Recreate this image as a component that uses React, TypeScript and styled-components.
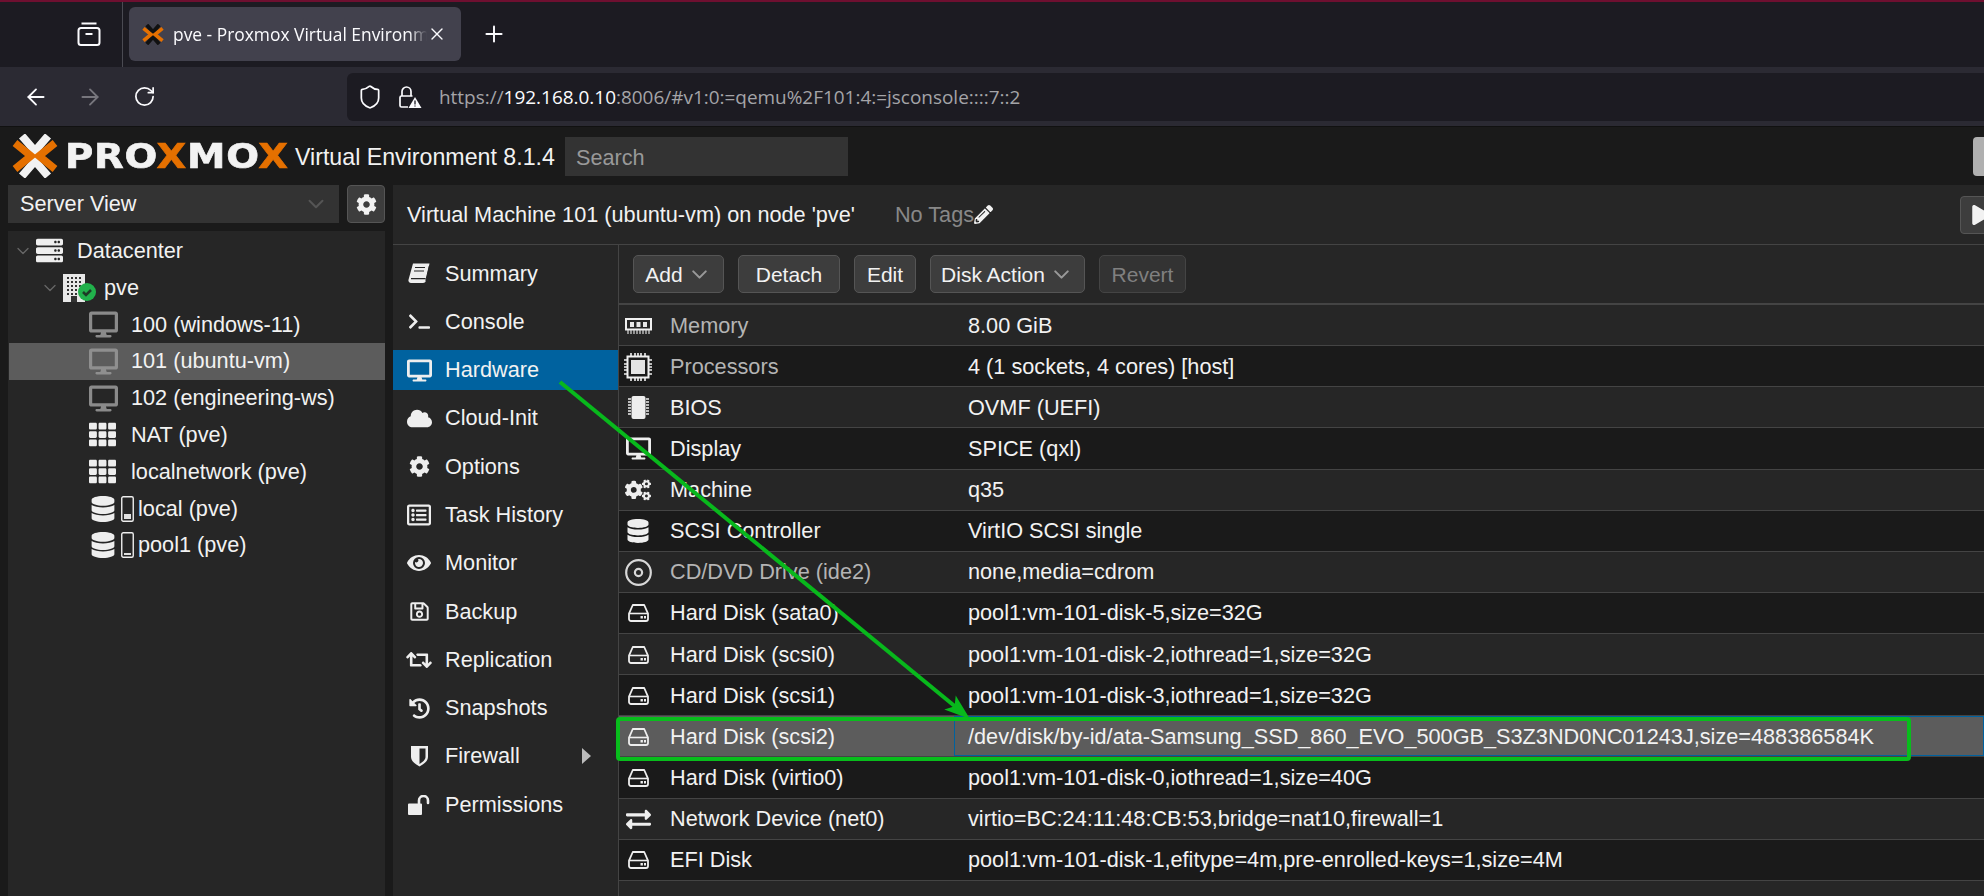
import React from 'react';
import styled, { createGlobalStyle } from 'styled-components';
import { ArrowLeft, ArrowRight, ChevronDown, Plus, RotateCw, Shield, X } from 'lucide-react';
import {
  FaTerminal,
  FaDesktop,
  FaCloud,
  FaCog,
  FaCogs,
  FaRegListAlt,
  FaEye,
  FaRegSave,
  FaRetweet,
  FaHistory,
  FaDatabase,
  FaExchangeAlt,
  FaPencilAlt,
  FaServer,
  FaTh,
  FaPlay,
} from 'react-icons/fa';

const GlobalStyle = createGlobalStyle`
  html, body {
    margin: 0;
    height: 896px;
    overflow: hidden;
    background: #1a1a1a;
  }
  * { box-sizing: border-box; }
`;

const BookIcon = () => (
  <svg width="22" height="21" viewBox="0 0 22 21">
    <path d="M5 0.5h16.5l-3.6 16.8a3 3 0 0 1-3 2.7H3a2.6 2.6 0 0 1-2.5-3.2z" fill="#eeeeee" />
    <path d="M3 15.6h14.6M7 4.5h10M6 8h10" stroke="#262626" strokeWidth="1.2" fill="none" />
    <path d="M17.8 17.6L21.3 3" stroke="#262626" strokeWidth="1" fill="none" />
  </svg>
);

const MemoryIcon = () => (
  <svg width="27" height="16" viewBox="0 0 27 16" fill="none">
    <rect x="1" y="1" width="25" height="10.5" stroke="#f0f0f0" strokeWidth="2" />
    <path d="M5 4h4v5H5zM11.5 4h4v5h-4zM18 4h4v5h-4z" fill="#e8e8e8" />
    <path d="M3 12v4M6 12v4M9 12v4M12 12v4M15 12v4M18 12v4M21 12v4M24 12v4" stroke="#dddddd" strokeWidth="1.2" />
  </svg>
);

const CpuIcon = () => (
  <svg width="28" height="28" viewBox="0 0 28 28" fill="none" stroke="#f0f0f0">
    <rect x="3.5" y="3.5" width="21" height="21" strokeWidth="2" />
    <rect x="7" y="7" width="14" height="14" fill="#e4e4e4" stroke="none" />
    <path
      d="M7 0v3M11 0v3M14 0v3M17 0v3M21 0v3M7 25v3M11 25v3M14 25v3M17 25v3M21 25v3M0 7h3M0 11h3M0 14h3M0 17h3M0 21h3M25 7h3M25 11h3M25 14h3M25 17h3M25 21h3"
      strokeWidth="1.6"
    />
  </svg>
);

const BiosIcon = () => (
  <svg width="21" height="23" viewBox="0 0 21 23" fill="none">
    <rect x="3.5" y="0" width="14" height="23" rx="2" fill="#eeeeee" />
    <path
      d="M0 3h3M0 6h3M0 9h3M0 12h3M0 15h3M0 18h3M18 3h3M18 6h3M18 9h3M18 12h3M18 15h3M18 18h3"
      stroke="#eeeeee"
      strokeWidth="1.4"
    />
  </svg>
);

const CdIcon = () => (
  <svg width="27" height="27" viewBox="0 0 27 27" fill="none" stroke="#d8d8d8">
    <circle cx="13.5" cy="13.5" r="12.3" strokeWidth="2.2" />
    <circle cx="13.5" cy="13.5" r="3.6" strokeWidth="2.2" />
  </svg>
);

const HddIcon = () => (
  <svg width="21" height="18" viewBox="0 0 21 18" fill="none">
    <path
      d="M4.8 1h11.4l3.8 8.6V15a2 2 0 0 1-2 2H3a2 2 0 0 1-2-2V9.6z"
      stroke="#eeeeee"
      strokeWidth="1.8"
      strokeLinejoin="round"
    />
    <path d="M1.5 9.5h18" stroke="#eeeeee" strokeWidth="1.6" />
    <path d="M12.5 12h2.4v2.4h-2.4zM16 12h2v2.4h-2z" fill="#eeeeee" />
  </svg>
);

const ShieldHalfIcon = () => (
  <svg width="19" height="22" viewBox="0 0 19 22">
    <path d="M1 1h17v11c0 4.5-5 7.5-8.5 9.5C6 19.5 1 16.5 1 12z" fill="#eeeeee" />
    <path d="M9.5 3.6h6V12c0 3-3.2 5.2-6 6.9z" fill="#262626" />
  </svg>
);

const UnlockIcon = () => (
  <svg width="22" height="20" viewBox="0 0 22 20" fill="none">
    <path d="M0 9.5a1 1 0 0 1 1-1h12a1 1 0 0 1 1 1V19a1 1 0 0 1-1 1H1a1 1 0 0 1-1-1z" fill="#eeeeee" />
    <path d="M11 8.5V5.5a4.5 4.5 0 0 1 9 0V8" stroke="#eeeeee" strokeWidth="2.6" strokeLinecap="round" />
  </svg>
);

const NodeIcon = () => (
  <svg width="34" height="28" viewBox="0 0 34 28">
    <rect x="0" y="0" width="22" height="28" fill="#e8e8e8" />
    {[3, 7, 11, 15, 19].map((y) =>
      [4, 8, 12, 16].map((x) => <rect key={`${x}-${y}`} x={x} y={y} width="2" height="2" fill="#333" />),
    )}
    <rect x="8" y="22" width="6" height="6" fill="#333" />
    <circle cx="24" cy="18" r="9" fill="#21b14b" />
    <path d="M20 18l3 3 5-5" stroke="#1d3b26" strokeWidth="2.6" fill="none" />
  </svg>
);

const UsageIcon = ({ level }: { level: number }) => (
  <svg width="13" height="26" viewBox="0 0 13 26">
    <rect x="0.75" y="0.75" width="11.5" height="24.5" rx="1.5" fill="none" stroke="#eeeeee" strokeWidth="1.4" />
    <rect x="3" y={23 - level} width="7" height={level} fill="#e0e0e0" />
  </svg>
);

const LockWarnIcon = () => (
  <svg width="24" height="24" viewBox="0 0 24 24" fill="none" stroke="#fbfbfe" strokeWidth="1.7">
    <path d="M4 11V6.5a4.5 4.5 0 0 1 9 0V11" />
    <path d="M10 22H3.5A1.5 1.5 0 0 1 2 20.5v-8A1.5 1.5 0 0 1 3.5 11h11" />
    <path d="M17 12l6.5 11h-13z" fill="#fbfbfe" stroke="none" />
    <path d="M17 15.5v4M17 20.5v1" stroke="#2b2a33" strokeWidth="1.4" />
  </svg>
);

const ViewIcon = () => (
  <svg width="24" height="24" viewBox="0 0 24 24" fill="none" stroke="#fbfbfe" strokeWidth="2">
    <rect x="1.5" y="6" width="21" height="17" rx="2.5" />
    <path d="M4.5 1.5h15M8.5 12h7" />
  </svg>
);

const LogoX = ({ small }: { small?: boolean }) => (
  <svg width={small ? 24 : 48} height={small ? 21 : 44} viewBox="0 0 48 44" fill="none">
    <path d="M11 2l13 15L37 2M11 42l13-15 13 15" stroke={small ? '#111' : '#f2f2f2'} strokeWidth="8" />
    <path d="M4 9l16 13L4 35M44 9L28 22l16 13" stroke="#e57000" strokeWidth="7.5" />
  </svg>
);

const Page = styled.div`
  position: relative;
  width: 1984px;
  height: 896px;
  overflow: hidden;
  display: flex;
  flex-direction: column;
  background: #1a1a1a;
  font-family: 'Liberation Sans', Arial, sans-serif;
`;

const TabStrip = styled.div`
  height: 67px;
  flex: none;
  display: flex;
  align-items: stretch;
  background: #1c1b22;
  border-top: 2px solid #6e0f30;
`;

const ViewButton = styled.div`
  width: 123px;
  display: flex;
  align-items: center;
  justify-content: flex-end;
  padding: 0 21px 2px 0;
  border-right: 1px solid #4a4a52;
`;

const Tab = styled.div`
  width: 332px;
  height: 54px;
  margin: 5px 0 0 6px;
  padding: 0 14px 0 12px;
  display: flex;
  align-items: center;
  border-radius: 6px;
  background: #42414d;
  color: #fbfbfe;
`;

const TabTitle = styled.span`
  flex: 1;
  margin-left: 8px;
  overflow: hidden;
  white-space: nowrap;
  font-family: 'Open Sans', 'Liberation Sans', sans-serif;
  font-size: 17.4px;
  mask-image: linear-gradient(to right, #000 93%, transparent 100%);
`;

const NewTab = styled.div`
  width: 66px;
  display: flex;
  align-items: center;
  justify-content: center;
  padding-bottom: 2px;
  color: #fbfbfe;
`;

const NavBar = styled.div`
  height: 60px;
  flex: none;
  display: flex;
  align-items: center;
  padding-left: 9px;
  background: #2b2a33;
  border-bottom: 1px solid #111;
`;

const NavIcon = styled.div<{ $off?: boolean }>`
  width: 54px;
  display: flex;
  justify-content: center;
  color: ${({ $off }) => ($off ? '#77767d' : '#fbfbfe')};
`;

const UrlBar = styled.div`
  flex: 1;
  height: 48px;
  margin-left: 176px;
  padding-left: 10px;
  display: flex;
  align-items: center;
  gap: 15px;
  background: #1c1b22;
  border-radius: 6px 0 0 6px;
  color: #fbfbfe;
`;

const UrlText = styled.span`
  margin-left: 2px;
  font-family: 'Open Sans', 'Liberation Sans', sans-serif;
  font-size: 18.95px;
  color: #a4a4a8;
  white-space: nowrap;
`;

const UrlHost = styled.span`
  color: #fbfbfe;
`;

const Header = styled.div`
  height: 58px;
  flex: none;
  display: flex;
  align-items: center;
  padding: 0 0 0 11px;
  background: #1a1a1a;
`;

const LogoBox = styled.div`
  width: 231px;
  margin-left: 6px;
  flex: none;
`;

const LogoText = styled.span`
  display: inline-block;
  font-family: 'DejaVu Sans', sans-serif;
  font-weight: 700;
  font-size: 33px;
  letter-spacing: 0.6px;
  line-height: 1;
  color: #f2f2f2;
  -webkit-text-stroke: 0.6px currentColor;
  transform: scaleX(1.17);
  transform-origin: left center;
`;

const LogoAccent = styled.span`
  color: #e57000;
`;

const Version = styled.span`
  margin-left: -1px;
  padding-top: 2px;
  font-size: 23.2px;
  color: #f2f2f2;
  white-space: nowrap;
`;

const SearchBox = styled.div`
  width: 283px;
  height: 39px;
  margin-left: 10px;
  padding: 3px 0 0 11px;
  display: flex;
  align-items: center;
  background: #333333;
  color: #999999;
  font-size: 21.7px;
`;

const UserButton = styled.div`
  width: 30px;
  height: 39px;
  margin-left: auto;
  margin-right: -19px;
  background: #b0b0b0;
  border-radius: 4px;
`;

const Main = styled.div`
  flex: 1;
  min-height: 0;
  display: flex;
  padding-left: 8px;
  gap: 8px;
`;

const LeftColumn = styled.div`
  width: 377px;
  flex: none;
  display: flex;
  flex-direction: column;
  gap: 8px;
`;

const ViewRow = styled.div`
  height: 38px;
  flex: none;
  display: flex;
  gap: 8px;
`;

const ViewSelect = styled.div`
  flex: 1;
  padding: 0 10px 0 12px;
  display: flex;
  align-items: center;
  justify-content: space-between;
  background: #333333;
  color: #f2f2f2;
  font-size: 21.7px;
`;

const GearButton = styled.div`
  width: 38px;
  display: flex;
  align-items: center;
  justify-content: center;
  background: #3d3d3d;
  border: 1px solid #555555;
  border-radius: 4px;
  color: #f2f2f2;
`;

const TreePanel = styled.div`
  flex: 1;
  padding-top: 1.6px;
  background: #262626;
`;

const TreeRow = styled.div<{ $depth: number; $selected?: boolean }>`
  height: 36.8px;
  margin-left: 1px;
  display: flex;
  align-items: center;
  padding-left: ${({ $depth }) => $depth}px;
  background: ${({ $selected }) => ($selected ? '#5c5c5c' : 'transparent')};
  color: #f2f2f2;
  font-size: 21.7px;
  white-space: nowrap;
`;

const TreeToggle = styled.span`
  width: 20px;
  display: flex;
  margin-left: -3px;
  margin-right: 3px;
  color: #666666;
`;

const TreeIcon = styled.span<{ $width: number; $color?: string }>`
  width: ${({ $width }) => $width}px;
  flex: none;
  display: flex;
  align-items: center;
  gap: 5px;
  color: ${({ $color }) => $color ?? '#eeeeee'};
`;

const RightPanel = styled.div`
  flex: 1;
  min-width: 0;
  display: flex;
  flex-direction: column;
  background: #262626;
`;

const TitleBar = styled.div`
  height: 60px;
  flex: none;
  display: flex;
  align-items: center;
  padding-left: 14px;
  border-bottom: 1px solid #444444;
  color: #f2f2f2;
  font-size: 21.7px;
  white-space: nowrap;
`;

const NoTags = styled.div`
  margin-left: 40px;
  display: flex;
  align-items: center;
  color: #888888;
`;

const StartButton = styled.div`
  width: 40px;
  height: 38px;
  margin-left: auto;
  margin-right: -16px;
  padding-left: 10px;
  display: flex;
  align-items: center;
  background: #3d3d3d;
  border: 1px solid #555555;
  border-radius: 4px;
  color: #f2f2f2;
`;

const Body = styled.div`
  flex: 1;
  min-height: 0;
  display: flex;
`;

const SideNav = styled.div`
  width: 226px;
  flex: none;
  display: flex;
  flex-direction: column;
  gap: 8.3px;
  padding-top: 8px;
  border-right: 1px solid #444444;
`;

const NavRow = styled.div<{ $active?: boolean }>`
  height: 40px;
  flex: none;
  display: flex;
  align-items: center;
  padding: 1px 27px 0 0;
  background: ${({ $active }) => ($active ? '#00629f' : 'transparent')};
  color: #f2f2f2;
  font-size: 21.7px;
`;

const NavGlyph = styled.span`
  width: 52px;
  flex: none;
  display: flex;
  justify-content: center;
  color: #eeeeee;
`;

const NavArrow = styled.span`
  margin-left: auto;
  width: 0;
  height: 0;
  border-left: 9px solid #bbbbbb;
  border-top: 8px solid transparent;
  border-bottom: 8px solid transparent;
`;

const Content = styled.div`
  flex: 1;
  min-width: 0;
  display: flex;
  flex-direction: column;
`;

const ActionBar = styled.div`
  height: 60px;
  flex: none;
  display: flex;
  align-items: center;
  gap: 14px;
  padding: 0 0 0 14px;
  border-bottom: 2px solid #444444;
`;

const ActionButton = styled.div<{ $width: number; $disabled?: boolean }>`
  width: ${({ $width }) => $width}px;
  height: 38px;
  padding-top: 1px;
  display: flex;
  align-items: center;
  justify-content: center;
  gap: 4px;
  background: ${({ $disabled }) => ($disabled ? '#333333' : '#3d3d3d')};
  border: 1px solid ${({ $disabled }) => ($disabled ? '#444444' : '#555555')};
  border-radius: 5px;
  color: ${({ $disabled }) => ($disabled ? '#808080' : '#f2f2f2')};
  font-size: 21px;
`;

const Caret = styled.span`
  display: flex;
  color: #999999;
`;

const HardwareRow = styled.div<{ $dark?: boolean; $selected?: boolean }>`
  height: 41.14px;
  flex: none;
  display: flex;
  background: ${({ $dark, $selected }) => ($selected ? '#5c5c5c' : $dark ? '#1a1a1a' : '#262626')};
  border-bottom: 1px solid #444444;
  color: #f2f2f2;
  font-size: 21.7px;
  white-space: nowrap;
`;

const KeyCell = styled.div<{ $dim?: boolean }>`
  width: 335px;
  flex: none;
  padding-top: 1px;
  display: flex;
  align-items: center;
  color: ${({ $dim }) => ($dim ? '#b4b4b4' : '#f2f2f2')};
`;

const RowIcon = styled.span`
  width: 51px;
  flex: none;
  display: flex;
  justify-content: center;
  padding-right: 13px;
  color: #eeeeee;
`;

const ValueCell = styled.div<{ $focused?: boolean }>`
  flex: 1;
  display: flex;
  align-items: center;
  padding: 1px 0 0 13px;
  border: 1px solid ${({ $focused }) => ($focused ? '#00629f' : 'transparent')};
`;

const HighlightBox = styled.div`
  position: absolute;
  left: 616px;
  top: 717px;
  width: 1295px;
  height: 44px;
  border: 4px solid #08bd1c;
  border-radius: 4px;
  pointer-events: none;
`;

const ArrowLayer = styled.svg`
  position: absolute;
  left: 0;
  top: 0;
  pointer-events: none;
`;

const treeItems = [
  { label: '100 (windows-11)', icon: <FaDesktop size={29} />, color: '#8a8a8a' },
  { label: '101 (ubuntu-vm)', icon: <FaDesktop size={29} />, color: '#8f8f8f', selected: true },
  { label: '102 (engineering-ws)', icon: <FaDesktop size={29} />, color: '#8a8a8a' },
  { label: 'NAT (pve)', icon: <FaTh size={27} /> },
  { label: 'localnetwork (pve)', icon: <FaTh size={27} /> },
];

const navItems = [
  { label: 'Summary', icon: <BookIcon /> },
  { label: 'Console', icon: <FaTerminal size={21} /> },
  { label: 'Hardware', icon: <FaDesktop size={25} />, active: true },
  { label: 'Cloud-Init', icon: <FaCloud size={25} /> },
  { label: 'Options', icon: <FaCog size={21} /> },
  { label: 'Task History', icon: <FaRegListAlt size={24} /> },
  { label: 'Monitor', icon: <FaEye size={24} /> },
  { label: 'Backup', icon: <FaRegSave size={21} /> },
  { label: 'Replication', icon: <FaRetweet size={26} /> },
  { label: 'Snapshots', icon: <FaHistory size={21} /> },
  { label: 'Firewall', icon: <ShieldHalfIcon />, arrow: true },
  { label: 'Permissions', icon: <UnlockIcon /> },
];

const hdd = <HddIcon />;

const hardware = [
  { name: 'Memory', value: '8.00 GiB', icon: <MemoryIcon />, dim: true },
  { name: 'Processors', value: '4 (1 sockets, 4 cores) [host]', icon: <CpuIcon />, dim: true },
  { name: 'BIOS', value: 'OVMF (UEFI)', icon: <BiosIcon /> },
  { name: 'Display', value: 'SPICE (qxl)', icon: <FaDesktop size={25} /> },
  { name: 'Machine', value: 'q35', icon: <FaCogs size={26} /> },
  { name: 'SCSI Controller', value: 'VirtIO SCSI single', icon: <FaDatabase size={24} /> },
  { name: 'CD/DVD Drive (ide2)', value: 'none,media=cdrom', icon: <CdIcon />, dim: true },
  { name: 'Hard Disk (sata0)', value: 'pool1:vm-101-disk-5,size=32G', icon: hdd },
  { name: 'Hard Disk (scsi0)', value: 'pool1:vm-101-disk-2,iothread=1,size=32G', icon: hdd },
  { name: 'Hard Disk (scsi1)', value: 'pool1:vm-101-disk-3,iothread=1,size=32G', icon: hdd },
  {
    name: 'Hard Disk (scsi2)',
    value: '/dev/disk/by-id/ata-Samsung_SSD_860_EVO_500GB_S3Z3ND0NC01243J,size=488386584K',
    icon: hdd,
    selected: true,
  },
  { name: 'Hard Disk (virtio0)', value: 'pool1:vm-101-disk-0,iothread=1,size=40G', icon: hdd },
  { name: 'Network Device (net0)', value: 'virtio=BC:24:11:48:CB:53,bridge=nat10,firewall=1', icon: <FaExchangeAlt size={25} /> },
  { name: 'EFI Disk', value: 'pool1:vm-101-disk-1,efitype=4m,pre-enrolled-keys=1,size=4M', icon: hdd },
];

const App: React.FC = () => {
  const isDark = (index: number) => index % 2 === 1;

  return (
    <Page>
      <GlobalStyle />
      <TabStrip>
        <ViewButton>
          <ViewIcon />
        </ViewButton>
        <Tab>
          <LogoX small />
          <TabTitle>pve - Proxmox Virtual Environment</TabTitle>
          <X size={20} strokeWidth={1.6} />
        </Tab>
        <NewTab>
          <Plus size={26} strokeWidth={1.8} />
        </NewTab>
      </TabStrip>
      <NavBar>
        <NavIcon>
          <ArrowLeft size={26} strokeWidth={1.7} />
        </NavIcon>
        <NavIcon $off>
          <ArrowRight size={26} strokeWidth={1.7} />
        </NavIcon>
        <NavIcon>
          <RotateCw size={23} strokeWidth={1.8} />
        </NavIcon>
        <UrlBar>
          <Shield size={26} strokeWidth={1.6} />
          <LockWarnIcon />
          <UrlText>
            https://<UrlHost>192.168.0.10</UrlHost>:8006/#v1:0:=qemu%2F101:4:=jsconsole::::7::2
          </UrlText>
        </UrlBar>
      </NavBar>
      <Header>
        <LogoX />
        <LogoBox>
          <LogoText>
            PRO<LogoAccent>X</LogoAccent>MO<LogoAccent>X</LogoAccent>
          </LogoText>
        </LogoBox>
        <Version>Virtual Environment 8.1.4</Version>
        <SearchBox>Search</SearchBox>
        <UserButton />
      </Header>
      <Main>
        <LeftColumn>
          <ViewRow>
            <ViewSelect>
              Server View
              <Caret>
                <ChevronDown size={26} strokeWidth={1.8} color="#555" />
              </Caret>
            </ViewSelect>
            <GearButton>
              <FaCog size={21} />
            </GearButton>
          </ViewRow>
          <TreePanel>
            <TreeRow $depth={7}>
              <TreeToggle>
                <ChevronDown size={24} strokeWidth={1.6} />
              </TreeToggle>
              <TreeIcon $width={41}>
                <FaServer size={27} />
              </TreeIcon>
              Datacenter
            </TreeRow>
            <TreeRow $depth={34}>
              <TreeToggle>
                <ChevronDown size={24} strokeWidth={1.6} />
              </TreeToggle>
              <TreeIcon $width={41}>
                <NodeIcon />
              </TreeIcon>
              pve
            </TreeRow>
            {treeItems.map((item) => (
              <TreeRow key={item.label} $depth={80} $selected={item.selected}>
                <TreeIcon $width={42} $color={item.color}>
                  {item.icon}
                </TreeIcon>
                {item.label}
              </TreeRow>
            ))}
            <TreeRow $depth={81}>
              <TreeIcon $width={48}>
                <FaDatabase size={26} />
                <UsageIcon level={5} />
              </TreeIcon>
              local (pve)
            </TreeRow>
            <TreeRow $depth={81}>
              <TreeIcon $width={48}>
                <FaDatabase size={26} />
                <UsageIcon level={2} />
              </TreeIcon>
              pool1 (pve)
            </TreeRow>
          </TreePanel>
        </LeftColumn>
        <RightPanel>
          <TitleBar>
            Virtual Machine 101 (ubuntu-vm) on node 'pve'
            <NoTags>
              No Tags
              <FaPencilAlt size={19} color="#f2f2f2" />
            </NoTags>
            <StartButton>
              <FaPlay size={20} />
            </StartButton>
          </TitleBar>
          <Body>
            <SideNav>
              {navItems.map((item) => (
                <NavRow key={item.label} $active={item.active}>
                  <NavGlyph>{item.icon}</NavGlyph>
                  {item.label}
                  {item.arrow && <NavArrow />}
                </NavRow>
              ))}
            </SideNav>
            <Content>
              <ActionBar>
                <ActionButton $width={91}>
                  Add
                  <Caret>
                    <ChevronDown size={25} strokeWidth={2} />
                  </Caret>
                </ActionButton>
                <ActionButton $width={102}>Detach</ActionButton>
                <ActionButton $width={62}>Edit</ActionButton>
                <ActionButton $width={155}>
                  Disk Action
                  <Caret>
                    <ChevronDown size={25} strokeWidth={2} />
                  </Caret>
                </ActionButton>
                <ActionButton $width={87} $disabled>
                  Revert
                </ActionButton>
              </ActionBar>
              {hardware.map((row, index) => (
                <HardwareRow key={row.name} $dark={isDark(index)} $selected={row.selected}>
                  <KeyCell $dim={row.dim}>
                    <RowIcon>{row.icon}</RowIcon>
                    {row.name}
                  </KeyCell>
                  <ValueCell $focused={row.selected}>{row.value}</ValueCell>
                </HardwareRow>
              ))}
            </Content>
          </Body>
        </RightPanel>
      </Main>
      <HighlightBox />
      <ArrowLayer width="1984" height="896" viewBox="0 0 1984 896">
        <path d="M560 382L957 708" stroke="#08b81c" strokeWidth="4" fill="none" />
        <path d="M970 719L944.3 709.4L954.6 706.3L955.7 695.6Z" fill="#08b81c" />
      </ArrowLayer>
    </Page>
  );
};

export default App;
